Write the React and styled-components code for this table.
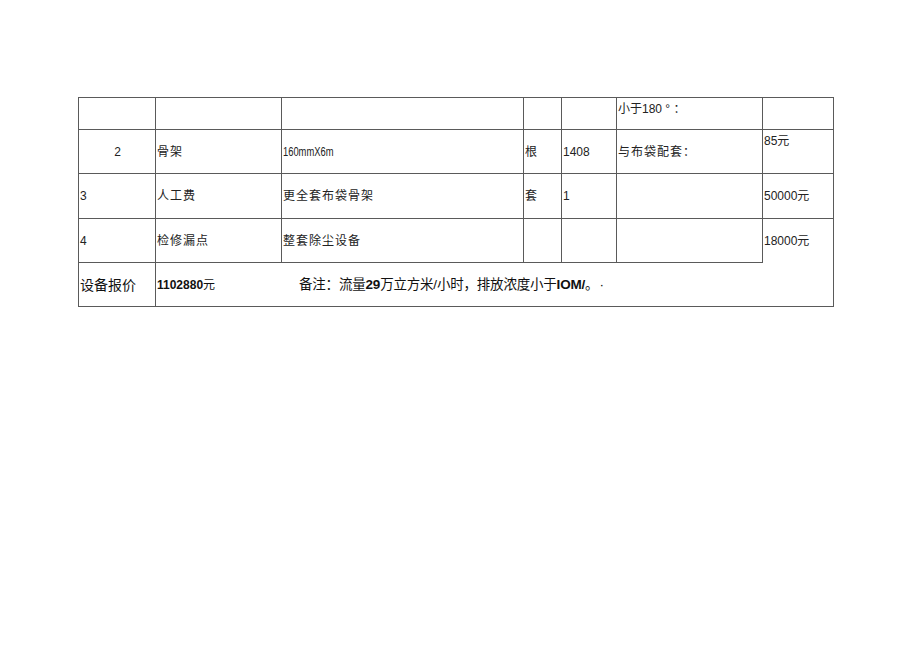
import React from "react";
import styled, { createGlobalStyle } from "styled-components";

const GlobalStyle = createGlobalStyle`
  body {
    margin: 0;
    background: #fff;
    font-family: "Liberation Sans", "Noto Sans CJK SC", sans-serif;
  }
`;

const Page = styled.div`
  width: 920px;
  height: 651px;
  padding: 97px 0 0 78px;
  box-sizing: border-box;
`;

const Sheet = styled.table`
  border-collapse: collapse;
  table-layout: fixed;
  width: 755px;
  color: #222;
  font-size: 12px;
  line-height: 16px;
`;

const Row = styled.tr`
  height: ${(p) => p.$h}px;
`;

const Cell = styled.td`
  border: 1px solid #5a5a5a;
  padding: 0 0 0 1px;
  vertical-align: ${(p) => (p.$top ? "top" : "middle")};
  padding-top: ${(p) => (p.$top ? "3px" : "0")};
  text-align: ${(p) => (p.$center ? "center" : "left")};
  letter-spacing: ${(p) => (p.$cjk ? "1px" : "0")};
  white-space: nowrap;
  overflow: visible;
  &.open-bottom {
    border-bottom: none;
  }
`;

const Narrow = styled.span`
  display: inline-block;
  transform: scaleX(0.78);
  transform-origin: left center;
`;

const FootCell = styled.td`
  border: 1px solid #5a5a5a;
  border-top: none;
  padding: 0 0 0 1px;
  vertical-align: middle;
  white-space: nowrap;
  font-size: 14px;
  color: #111;
`;

const FootLine = styled.div`
  display: flex;
  align-items: center;
`;

const Price = styled.span`
  width: 142px;
  font-size: 12px;
  font-weight: bold;
  b {
    font-weight: normal;
  }
`;

const Note = styled.span`
  font-size: 13.5px;
  letter-spacing: -0.2px;
  strong {
    font-weight: bold;
  }
`;

const Dot = styled.span`
  margin-left: 8px;
`;

export default function App() {
  return (
    <Page>
      <GlobalStyle />
      <Sheet>
        <colgroup>
          <col style={{ width: 77 }} />
          <col style={{ width: 126 }} />
          <col style={{ width: 242 }} />
          <col style={{ width: 38 }} />
          <col style={{ width: 55 }} />
          <col style={{ width: 146 }} />
          <col style={{ width: 71 }} />
        </colgroup>
        <tbody>
          <Row $h={32}>
            <Cell />
            <Cell />
            <Cell />
            <Cell />
            <Cell />
            <Cell $top>小于180 ° ：</Cell>
            <Cell />
          </Row>
          <Row $h={44}>
            <Cell $center>2</Cell>
            <Cell $cjk>骨架</Cell>
            <Cell>
              <Narrow>160mmX6m</Narrow>
            </Cell>
            <Cell $cjk>根</Cell>
            <Cell>1408</Cell>
            <Cell $cjk>与布袋配套：</Cell>
            <Cell $top>85元</Cell>
          </Row>
          <Row $h={45}>
            <Cell>3</Cell>
            <Cell $cjk>人工费</Cell>
            <Cell $cjk>更全套布袋骨架</Cell>
            <Cell $cjk>套</Cell>
            <Cell>1</Cell>
            <Cell />
            <Cell>50000元</Cell>
          </Row>
          <Row $h={44}>
            <Cell>4</Cell>
            <Cell $cjk>检修漏点</Cell>
            <Cell $cjk>整套除尘设备</Cell>
            <Cell />
            <Cell />
            <Cell />
            <Cell className="open-bottom">18000元</Cell>
          </Row>
          <Row $h={44}>
            <FootCell>设备报价</FootCell>
            <FootCell colSpan={6}>
              <FootLine>
                <Price>
                  1102880<b>元</b>
                </Price>
                <Note>
                  备注：流量<strong>29</strong>万立方米/小时，排放浓度小于
                  <strong>IOM/</strong>。
                  <Dot>·</Dot>
                </Note>
              </FootLine>
            </FootCell>
          </Row>
        </tbody>
      </Sheet>
    </Page>
  );
}
